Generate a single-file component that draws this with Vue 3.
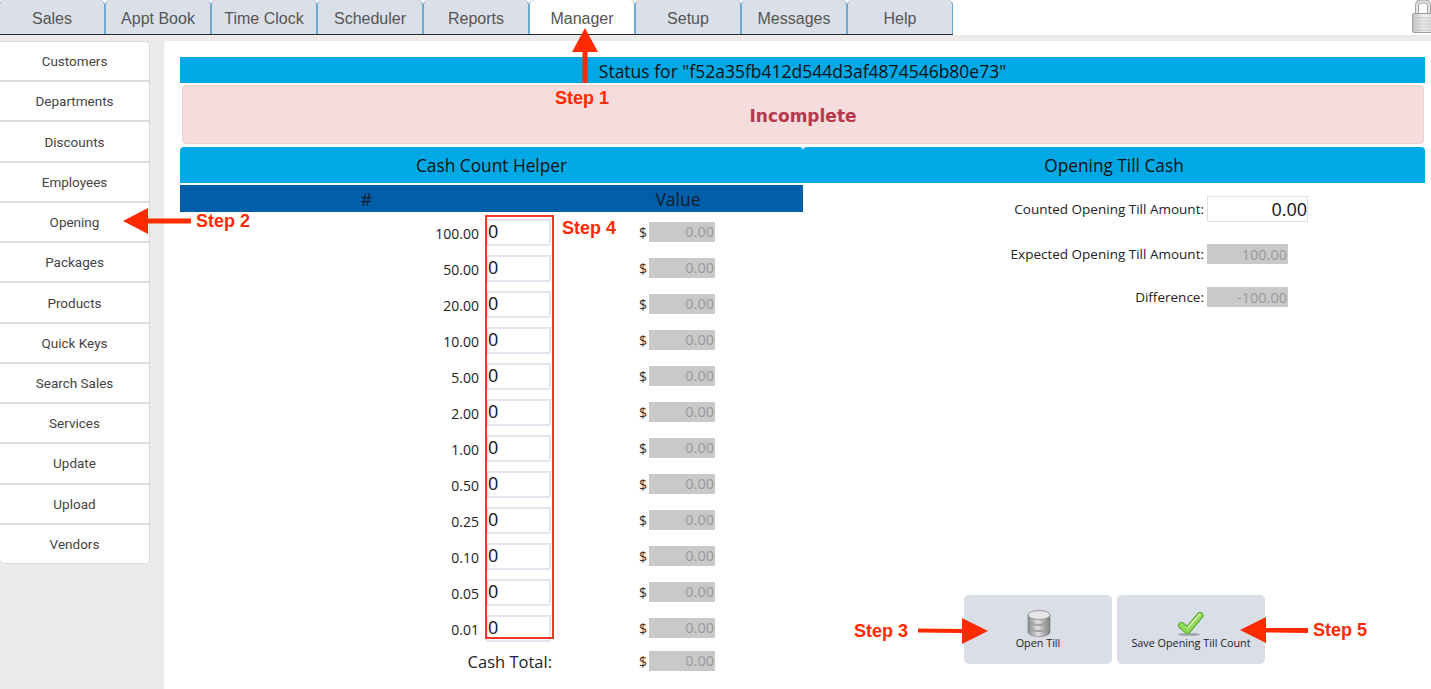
<script setup>
const tabs = ['Sales', 'Appt Book', 'Time Clock', 'Scheduler', 'Reports', 'Manager', 'Setup', 'Messages', 'Help']
const menu = ['Customers', 'Departments', 'Discounts', 'Employees', 'Opening', 'Packages', 'Products', 'Quick Keys', 'Search Sales', 'Services', 'Update', 'Upload', 'Vendors']
const denominations = ['100.00', '50.00', '20.00', '10.00', '5.00', '2.00', '1.00', '0.50', '0.25', '0.10', '0.05', '0.01']
</script>

<template>
  <div class="page">
    <header class="topbar">
      <nav class="tabs">
        <div v-for="t in tabs" :key="t" class="tab" :class="{ active: t === 'Manager' }">{{ t }}</div>
      </nav>
      <svg class="lock" width="20" height="34" viewBox="0 0 20 34">
        <defs>
          <linearGradient id="lockBody" x1="0" y1="0" x2="1" y2="0">
            <stop offset="0" stop-color="#c4c4c4" />
            <stop offset="0.5" stop-color="#efefef" />
            <stop offset="1" stop-color="#dadada" />
          </linearGradient>
        </defs>
        <path d="M6 15V6c0-3 1.500-4.500 4.500-4.500h3c3 0 4.500 1.500 4.500 4.500v9" fill="none" stroke="#a3a3a3" stroke-width="4" />
        <path d="M6 15V6c0-3 1.500-4.500 4.500-4.500h3c3 0 4.500 1.500 4.500 4.500v9" fill="none" stroke="#e4e4e4" stroke-width="2" />
        <rect x="1.500" y="13.500" width="22" height="19" rx="1.500" fill="url(#lockBody)" stroke="#9d9d9d" />
        <path d="M2 18h20M2 21h20M2 24h20M2 27h20M2 30h20" stroke="#c6c6c6" />
      </svg>
    </header>

    <div class="content">
      <aside class="sidebar">
        <div v-for="m in menu" :key="m" class="menu-item">{{ m }}</div>
      </aside>

      <main class="panel">
        <div class="status">Status for "f52a35fb412d544d3af4874546b80e73"</div>
        <div class="alert">Incomplete</div>

        <div class="columns">
          <section class="helper">
            <h2 class="head">Cash Count Helper</h2>
            <div class="subhead"><span>#</span><span>Value</span></div>
            <div v-for="d in denominations" :key="d" class="row">
              <span class="denom">{{ d }}</span>
              <input class="count" value="0" readonly />
              <span class="dollar">$</span>
              <input class="readonly" value="0.00" readonly />
            </div>
            <div class="row total">
              <span class="total-label">Cash Total:</span>
              <span class="dollar">$</span>
              <input class="readonly" value="0.00" readonly />
            </div>
          </section>

          <section class="till">
            <h2 class="head">Opening Till Cash</h2>
            <div class="field first">
              <label>Counted Opening Till Amount:</label>
              <input class="amount" value="0.00" readonly />
            </div>
            <div class="field second">
              <label>Expected Opening Till Amount:</label>
              <input class="readonly wide" value="100.00" readonly />
            </div>
            <div class="field third">
              <label>Difference:</label>
              <input class="readonly wide" value="-100.00" readonly />
            </div>

            <div class="actions">
              <button class="action">
                <svg class="db" width="24" height="28" viewBox="0 0 24 28">
                  <defs>
                    <linearGradient id="disc" x1="0" y1="0" x2="1" y2="0">
                      <stop offset="0" stop-color="#8a8a8a" />
                      <stop offset="0.45" stop-color="#e2e2e2" />
                      <stop offset="1" stop-color="#7a7a7a" />
                    </linearGradient>
                  </defs>
                  <g v-for="y in [17, 11, 5]" :key="y">
                    <path :d="`M1 ${y}v5c0 2.500 4.900 4.500 11 4.500s11-2 11-4.500v-5z`" fill="url(#disc)" stroke="#777" stroke-width="0.600" />
                    <ellipse cx="12" :cy="y" rx="11" ry="4.500" fill="#e6e6e6" stroke="#8a8a8a" stroke-width="0.800" />
                  </g>
                </svg>
                <span>Open Till</span>
              </button>
              <button class="action">
                <svg width="28" height="28" viewBox="0 0 28 28">
                  <defs>
                    <linearGradient id="tick" x1="0" y1="0" x2="1" y2="1">
                      <stop offset="0" stop-color="#c4ec80" />
                      <stop offset="1" stop-color="#4fb52a" />
                    </linearGradient>
                  </defs>
                  <ellipse cx="12" cy="24.500" rx="11" ry="1.300" fill="#6e766f" opacity="0.600" />
                  <path d="M4.500 15.500L10.500 20.500L23 5.500" fill="none" stroke="#55a833" stroke-width="7" stroke-linejoin="round" stroke-linecap="round" />
                  <path d="M4.500 15.500L10.500 20.500L23 5.500" fill="none" stroke="#93d95a" stroke-width="5" stroke-linejoin="round" stroke-linecap="round" />
                  <path d="M11 17.500L22.500 4.500" fill="none" stroke="#d8f3b0" stroke-width="1.500" stroke-linecap="round" />
                </svg>
                <span>Save Opening Till Count</span>
              </button>
            </div>
          </section>
        </div>
      </main>
    </div>

    <div class="outline"></div>
    <svg class="arrows" width="1431" height="689" viewBox="0 0 1431 689">
      <g fill="#ff2a00">
        <path d="M582.500 83V52H572L585 28l13 24h-10.500v31z" />
        <path d="M191 218.500v5h-43V234l-25-13 25-13v10.500z" />
        <path d="M918 628.500l44 .5v-11l26 13-26 13v-11l-44-.5z" />
        <path d="M1308 628v5l-42-.5V643l-26-13 26-13v11z" />
      </g>
    </svg>
    <span class="step s1">Step 1</span>
    <span class="step s2">Step 2</span>
    <span class="step s3">Step 3</span>
    <span class="step s4">Step 4</span>
    <span class="step s5">Step 5</span>
  </div>
</template>

<style>
html, body { margin: 0; overflow: hidden; }
</style>

<style scoped>
.page {
  position: relative;
  width: 1431px;
  height: 689px;
  overflow: hidden;
  display: flex;
  flex-direction: column;
  background: #ecebe9;
  font-family: "Open Sans", "Noto Sans", sans-serif;
  color: #222;
}

.topbar {
  height: 35px;
  flex: none;
  display: flex;
  justify-content: space-between;
  background: #fff;
}
.tabs {
  display: flex;
  height: 35px;
  box-sizing: border-box;
  margin-left: -1px;
  border-bottom: 1px solid #1f2a33;
}
.tab {
  width: 106px;
  box-sizing: border-box;
  border: 1px solid #6fa8d0;
  border-bottom: none;
  border-top: none;
  border-radius: 5px 5px 0 0;
  background: #dbe0e8;
  font: 16px/37px "Liberation Sans", Arial, sans-serif;
  color: #555;
  text-align: center;
}
.tab.active { background: #fff; }
.lock { flex: none; }

.content {
  flex: 1;
  display: flex;
  padding-top: 6px;
  min-height: 0;
}
.sidebar {
  width: 150px;
  height: 523px;
  margin-right: 14px;
  flex: none;
  box-sizing: border-box;
  display: flex;
  flex-direction: column;
  background: #fff;
  border: 1px solid #d9d9d9;
  border-left: none;
  border-radius: 0 5px 5px 5px;
}
.menu-item {
  flex: 1;
  display: flex;
  align-items: center;
  justify-content: center;
  font: 13.500px Roboto, sans-serif;
  color: #444;
  border-bottom: 2px solid #dedede;
}
.menu-item:last-child { border-bottom: none; }

.panel {
  flex: 1;
  min-width: 0;
  box-sizing: border-box;
  padding: 16px 6px 0 16px;
  background: #fff;
  border-top-left-radius: 4px;
  display: flex;
  flex-direction: column;
}
.status {
  height: 26px;
  flex: none;
  background: #00a9e6;
  color: #111;
  font-size: 17.500px;
  line-height: 28px;
  text-align: center;
}
.alert {
  height: 59px;
  flex: none;
  box-sizing: border-box;
  margin: 2px 1px 0 2px;
  background: #f5dcdd;
  border: 1px solid #f0cfd2;
  border-radius: 4px;
  color: #b5394a;
  font: bold 17px/60px "DejaVu Sans", sans-serif;
  text-align: center;
}
.columns {
  flex: 1;
  display: flex;
  margin-top: 3px;
  min-height: 0;
}
.helper { width: 623px; flex: none; }
.till {
  flex: 1;
  display: flex;
  flex-direction: column;
  padding-bottom: 25px;
}
.head {
  height: 36px;
  margin: 0;
  flex: none;
  background: #00a9e6;
  color: #111;
  border-radius: 4px 4px 0 0;
  font-size: 17.300px;
  font-weight: 400;
  line-height: 37px;
  text-align: center;
}
.subhead {
  height: 27px;
  margin-top: 2px;
  margin-bottom: 2px;
  background: #005fa8;
  color: #10202e;
  font-size: 17.500px;
  line-height: 28px;
  display: grid;
  grid-template-columns: 373px 250px;
  text-align: center;
}
.row {
  height: 36px;
  display: grid;
  grid-template-columns: 306px 65px 98px 66px;
  align-items: center;
}
.denom {
  font-size: 14px;
  text-align: right;
  padding-right: 7px;
  padding-top: 2px;
}
.count {
  box-sizing: border-box;
  width: 65px;
  height: 27px;
  border: 2px solid #e5e5ef;
  padding: 0 0 2px 0;
  outline: none;
  background: #fff;
  font-family: inherit;
  font-size: 18px;
  color: #111;
}
.dollar {
  text-align: right;
  padding-right: 2px;
  font-size: 14px;
  color: #333;
}
.readonly {
  box-sizing: border-box;
  width: 66px;
  height: 20px;
  border: none;
  outline: none;
  padding: 0 1px 2px 0;
  background: #c9c9c9;
  color: #999;
  font-family: inherit;
  font-size: 14.500px;
  text-align: right;
}
.readonly.wide { width: 81px; padding-bottom: 0; }
.total {
  height: 30px;
  grid-template-columns: 372px 97px 66px;
}
.total-label {
  font-size: 16.500px;
  text-align: right;
}

.field {
  display: grid;
  grid-template-columns: 401px auto;
  column-gap: 3px;
  justify-content: start;
  align-items: center;
  font-size: 13.500px;
}
.field label { text-align: right; color: #222; }
.field.first { margin-top: 13px; }
.field.second { margin-top: 22px; }
.field.third { margin-top: 23px; }
.amount {
  box-sizing: border-box;
  width: 101px;
  height: 26px;
  border: 1px solid #dedfec;
  outline: none;
  padding: 0;
  background: #fff;
  font-family: inherit;
  font-size: 18px;
  text-align: right;
  color: #111;
}
.actions {
  margin-top: auto;
  margin-left: 161px;
  display: flex;
  gap: 5px;
}
.action {
  width: 148px;
  height: 69px;
  box-sizing: border-box;
  border: none;
  border-radius: 5px;
  background: #d9dee7;
  padding: 15px 0 0;
  display: flex;
  flex-direction: column;
  align-items: center;
  font-family: inherit;
  font-size: 10.800px;
  color: #222;
}
.action svg { display: block; }
.action .db { margin-left: 2px; }
.action span { margin-top: -3px; }

.outline {
  position: absolute;
  left: 485px;
  top: 215px;
  width: 65px;
  height: 420px;
  border: 2px solid #f0392b;
}
.arrows {
  position: absolute;
  left: 0;
  top: 0;
  pointer-events: none;
}
.step {
  position: absolute;
  font: bold 18px/20px "Liberation Sans", Arial, sans-serif;
  color: #ff2a00;
  white-space: nowrap;
}
.s1 { left: 555px; top: 88px; }
.s2 { left: 196px; top: 211px; }
.s3 { left: 854px; top: 621px; }
.s4 { left: 562px; top: 218px; }
.s5 { left: 1313px; top: 620px; }
</style>
